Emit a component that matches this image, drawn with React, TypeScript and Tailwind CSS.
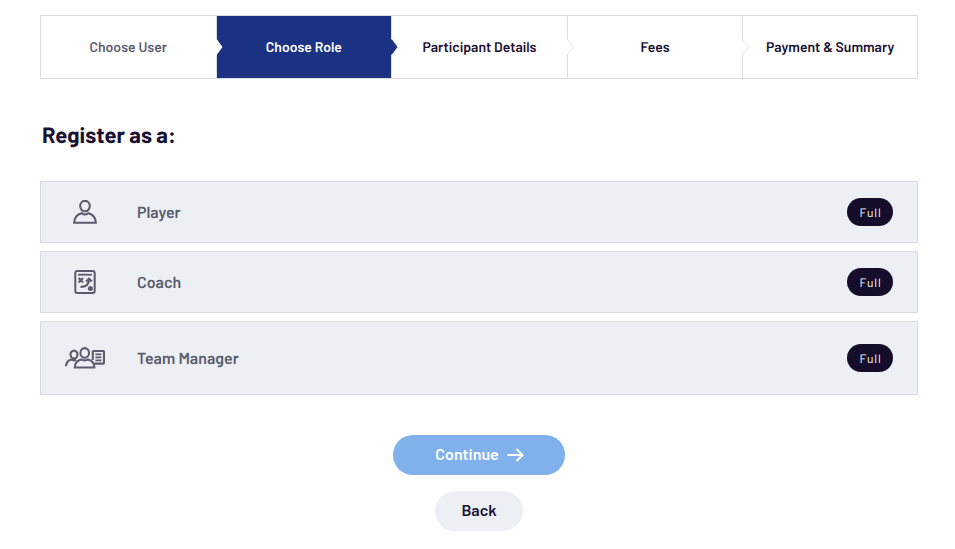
import clsx from "clsx";

type StepState = "done" | "active" | "todo";

const STEPS: { label: string; state: StepState }[] = [
  { label: "Choose User", state: "done" },
  { label: "Choose Role", state: "active" },
  { label: "Participant Details", state: "todo" },
  { label: "Fees", state: "todo" },
  { label: "Payment & Summary", state: "todo" },
];

const ROLES = [
  { label: "Player", icon: PlayerIcon },
  { label: "Coach", icon: CoachIcon },
  { label: "Team Manager", icon: TeamManagerIcon },
];

function PlayerIcon() {
  return (
    <svg width="24" height="24" viewBox="0 0 24 24" fill="none" stroke="currentColor" strokeWidth="2.1">
      <ellipse cx="12" cy="6.1" rx="4.8" ry="5.2" />
      <path d="M1.2 22.8C1.2 17.8 4 14.6 8.4 13.2C10.6 14.8 13.4 14.8 15.6 13.2C20 14.6 22.8 17.8 22.8 22.8Z" />
    </svg>
  );
}

function CoachIcon() {
  return (
    <svg width="22" height="24" viewBox="0 0 22 24" fill="none" stroke="currentColor" strokeWidth="2">
      <rect x="1.3" y="1" width="19.4" height="22" rx="2" />
      <path d="M4 4.7H18" strokeWidth="1.8" />
      <path d="M4.6 8L9 12.4M9 8L4.6 12.4" strokeWidth="2.1" />
      <path d="M6.5 16.9C12 16.9 15 14.5 15 9.5" strokeWidth="2.1" />
      <path d="M12.1 11.6L15 8.8L17.9 11.6" strokeWidth="2.1" />
      <circle cx="16.4" cy="18.6" r="2.5" fill="currentColor" stroke="none" />
    </svg>
  );
}

function TeamManagerIcon() {
  return (
    <svg width="40" height="24" viewBox="0 0 40 24" fill="none" stroke="currentColor" strokeWidth="2.1">
      <ellipse cx="9" cy="8.6" rx="3.5" ry="4" />
      <path d="M1 20.2C1.2 16.6 3.1 14.3 6.3 13.5C7.8 14.6 9.6 14.6 11.2 13.8" />
      <ellipse cx="19.7" cy="6.9" rx="4.3" ry="4.8" />
      <path d="M9.8 21.5C9.8 17.3 12.2 14.4 16.3 13.4C18.5 14.7 20.9 14.7 23.1 13.4C27 14.4 29.4 17.3 29.4 21.5Z" />
      <path d="M27.8 14V5.8Q27.8 5 28.6 5H38.2Q39 5 39 5.8V16.8Q39 17.6 38.2 17.6H29.4" />
      <path d="M30.4 8.4H36.4M30.4 11.4H36.4M30.4 14.4H36.4" strokeWidth="1.6" />
    </svg>
  );
}

function StepPointer({ state }: { state: StepState }) {
  return (
    <svg
      className={clsx(
        "absolute -left-px top-[23px]",
        state === "active" ? "text-[#1b3182]" : "text-white"
      )}
      width="8"
      height="16"
      viewBox="0 0 8 16"
    >
      <path d="M0 0.5H1L6.5 8L1 15.5H0Z" fill="currentColor" />
      {state === "todo" && <path d="M0.8 0.5L6.3 8L0.8 15.5" fill="none" stroke="#e3e6ea" />}
    </svg>
  );
}

function Stepper() {
  return (
    <ol className="grid h-16 grid-cols-5">
      {STEPS.map((step, i) => (
        <li
          key={step.label}
          className={clsx(
            "relative flex items-center justify-center border-y border-l border-[#d8dde2] text-[14px] font-semibold last:border-r",
            step.state === "done" && "text-[#5e6070]",
            step.state === "active" && "bg-[#1b3182] bg-clip-padding text-white",
            step.state === "todo" && "text-[#1a1031]"
          )}
        >
          {i > 0 && <StepPointer state={STEPS[i - 1].state} />}
          <span className="pb-0.5">{step.label}</span>
        </li>
      ))}
    </ol>
  );
}

export default function App() {
  return (
    <main className="h-[549px] overflow-hidden bg-white pt-[15px] pr-[37px] pl-10 font-['Barlow','Roboto',sans-serif] text-[#1a1031] [text-rendering:geometricPrecision]">
      <Stepper />

      <h1 className="mt-10 pl-0.5 text-[22px] leading-8 font-bold">Register as a:</h1>

      <ul className="mt-[30px] flex flex-col gap-2">
        {ROLES.map(({ label, icon: Icon }) => (
          <li
            key={label}
            className="flex items-center border border-[#d8dde2] bg-[#ecf0f5] px-6 py-4 text-[#5a5c6b] last:py-[22px]"
          >
            <div className="flex w-10 justify-center">
              <Icon />
            </div>
            <span className="ml-8 pt-0.5 text-base leading-6 font-semibold">{label}</span>
            <span className="ml-auto flex h-7 w-[46px] items-center justify-center rounded-full bg-[#160d2b] pt-px pl-px text-[12px] tracking-[0.9px] text-white">
              Full
            </span>
          </li>
        ))}
      </ul>

      <div className="mt-10 flex flex-col items-center gap-4">
        <button
          disabled
          className="flex h-10 w-[172px] items-center justify-center gap-2 rounded-full bg-[#80b1ec] pl-px text-base font-semibold text-white"
        >
          <span className="pb-0.5">Continue</span>
          <svg width="17" height="14" viewBox="0 0 17 14" fill="none" stroke="currentColor" strokeWidth="2">
            <path d="M0.5 7H15.5M9.5 1L15.5 7L9.5 13" />
          </svg>
        </button>
        <button className="h-10 w-[88px] rounded-full bg-[#ecf0f5] pb-0.5 text-base font-semibold">Back</button>
      </div>
    </main>
  );
}
